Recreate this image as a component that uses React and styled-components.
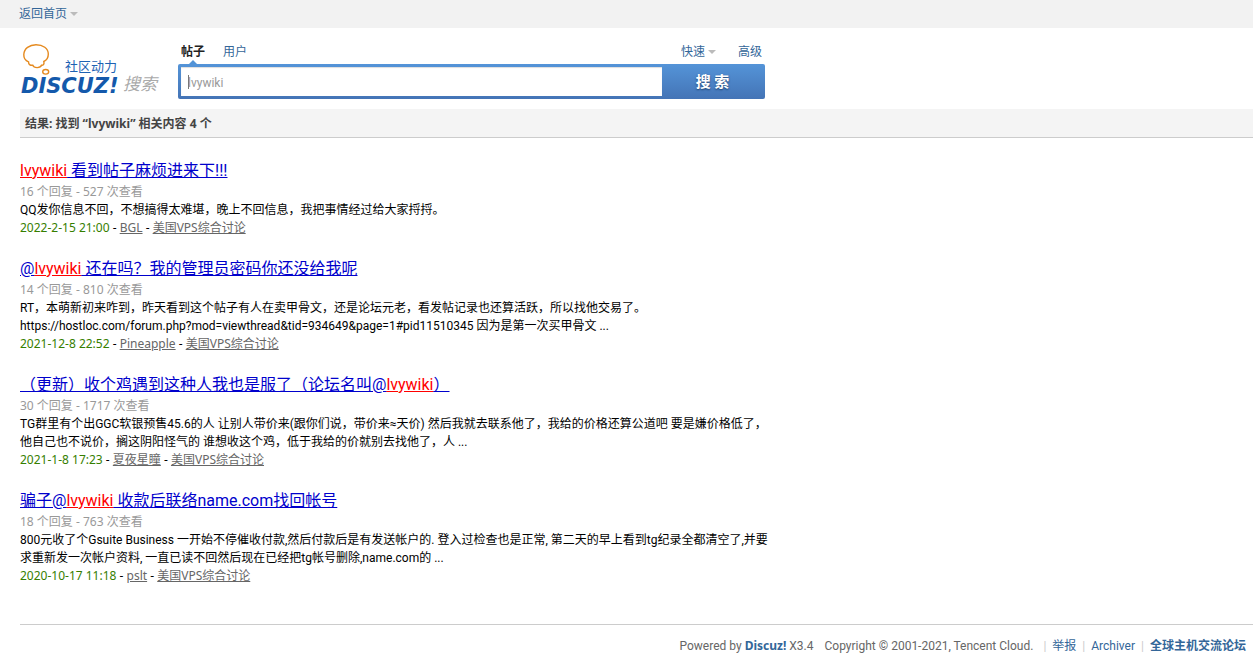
import React, { useState } from "react";
import styled, { createGlobalStyle } from "styled-components";

const colors = {
  link: "#336699",
  title: "#0000cc",
  red: "#ff0000",
  green: "#367e00",
  grey: "#666666",
  light: "#999999",
  line: "#cccccc"
};

const wideFont = 'font-family: "Noto Sans", "Noto Sans CJK SC", sans-serif;';

const KEYWORD = "lvywiki";

const results = [
  {
    id: 1,
    title: "lvywiki 看到帖子麻烦进来下!!!",
    replies: 16,
    views: 527,
    lines: ["QQ发你信息不回，不想搞得太难堪，晚上不回信息，我把事情经过给大家捋捋。"],
    date: "2022-2-15 21:00",
    author: "BGL"
  },
  {
    id: 2,
    title: "@lvywiki 还在吗？我的管理员密码你还没给我呢",
    replies: 14,
    views: 810,
    lines: [
      "RT，本萌新初来咋到，昨天看到这个帖子有人在卖甲骨文，还是论坛元老，看发帖记录也还算活跃，所以找他交易了。",
      "https://hostloc.com/forum.php?mod=viewthread&tid=934649&page=1#pid11510345 因为是第一次买甲骨文 ..."
    ],
    date: "2021-12-8 22:52",
    author: "Pineapple"
  },
  {
    id: 3,
    title: "（更新）收个鸡遇到这种人我也是服了（论坛名叫@lvywiki）",
    replies: 30,
    views: 1717,
    lines: [
      "TG群里有个出GGC软银预售45.6的人 让别人带价来(跟你们说，带价来≈天价) 然后我就去联系他了，我给的价格还算公道吧 要是嫌价格低了，",
      "他自己也不说价，搁这阴阳怪气的 谁想收这个鸡，低于我给的价就别去找他了，人 ..."
    ],
    date: "2021-1-8 17:23",
    author: "夏夜星瞳"
  },
  {
    id: 4,
    title: "骗子@lvywiki 收款后联络name.com找回帐号",
    replies: 18,
    views: 763,
    lines: [
      "800元收了个Gsuite Business 一开始不停催收付款,然后付款后是有发送帐户的. 登入过检查也是正常, 第二天的早上看到tg纪录全都清空了,并要",
      "求重新发一次帐户资料, 一直已读不回然后现在已经把tg帐号删除,name.com的 ..."
    ],
    date: "2020-10-17 11:18",
    author: "pslt"
  }
];

// wraps the searched keyword in red
const Highlight = ({ text }) => {
  const [before, after] = text.split(KEYWORD);
  return (
    <>
      {before}
      <Hit>{KEYWORD}</Hit>
      {after}
    </>
  );
};

const Logo = () => (
  <svg width="140" height="56" viewBox="0 0 140 56" role="img" aria-label="Discuz! 搜索">
    <g fill="none" stroke="#e58a1f" strokeWidth="1.4">
      <path d="M8.500 20.800C5 19.500 3.700 16.500 3.800 13.500C4 7.500 9.500 3.700 16 3.700C23 3.700 28.300 7.500 28.300 13C28.300 17 26.500 19.300 23.800 20.500C24.500 23 23.500 24.300 21.500 24.300C20.500 27.200 14 27.500 12.800 24.300C10 24.500 8.500 23.500 8.500 20.800Z" />
      <ellipse cx="25.700" cy="30.800" rx="3" ry="2.300" />
    </g>
    <LogoText x="45" y="30" $size={13} $color="#1d62b3">
      社区动力
    </LogoText>
    <LogoText x="1" y="52" $size={21} $color="#1459ab" $brand>
      DISCUZ!
    </LogoText>
    <LogoText x="103" y="49" $size={17} $color="#aaaaaa" $italic>
      搜索
    </LogoText>
  </svg>
);

const Result = ({ title, replies, views, lines, date, author }) => (
  <Item>
    <ItemTitle>
      <TitleLink href="#thread">
        <Highlight text={title} />
      </TitleLink>
    </ItemTitle>
    <Counts>
      {replies} 个回复 - {views} 次查看
    </Counts>
    {lines.map(line => (
      <Line key={line}>{line}</Line>
    ))}
    <Meta>
      <DateText>{date}</DateText> - <GreyLink href="#user">{author}</GreyLink> -{" "}
      <GreyLink href="#forum">美国VPS综合讨论</GreyLink>
    </Meta>
  </Item>
);

const App = () => {
  const [query, setQuery] = useState(KEYWORD);

  return (
    <>
      <GlobalStyle />
      <TopBar>
        <NavLink href="#home">
          返回首页
          <Arrow />
        </NavLink>
      </TopBar>
      <Header>
        <Logo />
        <SearchForm onSubmit={e => e.preventDefault()}>
          <Tabs>
            <Tab href="#posts" $active>
              帖子
            </Tab>
            <Tab href="#users">用户</Tab>
            <Spacer />
            <Tab href="#quick">
              快速
              <Arrow />
            </Tab>
            <Tab href="#advanced">高级</Tab>
          </Tabs>
          <SearchBox>
            <Field>
              <Input
                type="text"
                aria-label="搜索"
                value={query}
                onChange={e => setQuery(e.target.value)}
              />
              <Caret />
            </Field>
            <SearchButton type="submit">搜 索</SearchButton>
          </SearchBox>
        </SearchForm>
      </Header>
      <Main>
        <Summary>结果: 找到 “{KEYWORD}” 相关内容 4 个</Summary>
        <List>
          {results.map(result => (
            <Result key={result.id} {...result} />
          ))}
        </List>
        <Footer>
          <span>
            Powered by{" "}
            <FooterLink href="#discuz" $bold>
              Discuz!
            </FooterLink>{" "}
            X3.4
          </span>
          <Copyright>Copyright © 2001-2021, Tencent Cloud.</Copyright>
          <Pipe>|</Pipe>
          <FooterLink href="#report">举报</FooterLink>
          <Pipe>|</Pipe>
          <FooterLink href="#archiver">Archiver</FooterLink>
          <Pipe>|</Pipe>
          <FooterLink href="#site" $bold>
            全球主机交流论坛
          </FooterLink>
        </Footer>
      </Main>
    </>
  );
};

const GlobalStyle = createGlobalStyle`
  * {
    box-sizing: border-box;
  }
  body {
    margin: 0;
    background: #fff;
    color: #000;
    font: 12px/18px Roboto, "Noto Sans CJK SC", sans-serif;
  }
  input, button {
    font-family: inherit;
  }
`;

const TopBar = styled.nav`
  display: flex;
  align-items: center;
  height: 28px;
  padding: 0 19px;
  background: #f2f2f2;
`;

const NavLink = styled.a`
  display: flex;
  align-items: center;
  color: ${colors.link};
  text-decoration: none;
`;

const Arrow = styled.span`
  margin: 0 4px 0 3px;
  border: 4px solid transparent;
  border-top-color: #bbb;
  border-bottom: 0;
`;

const Header = styled.header`
  display: flex;
  align-items: flex-start;
  gap: 18px;
  padding: 13px 20px 10px;
`;

const LogoText = styled.text`
  fill: ${({ $color }) => $color};
  font-size: ${({ $size }) => $size}px;
  font-family: ${({ $brand }) =>
    $brand ? '"DejaVu Sans", sans-serif' : '"Noto Sans CJK SC", sans-serif'};
  font-weight: ${({ $brand }) => ($brand ? "bold" : "normal")};
  font-style: ${({ $brand, $italic }) =>
    $brand || $italic ? "italic" : "normal"};
`;

const SearchForm = styled.form`
  flex: 0 1 587px;
`;

const Tabs = styled.div`
  display: flex;
  gap: 18px;
  height: 23px;
  padding: 2px 3px 0;
`;

const Tab = styled.a`
  position: relative;
  display: flex;
  align-items: center;
  color: ${({ $active }) => ($active ? "#222" : colors.link)};
  font-weight: ${({ $active }) => ($active ? "bold" : "normal")};
  line-height: 18px;
  height: 18px;
  text-decoration: none;

  &::after {
    content: "";
    display: ${({ $active }) => ($active ? "block" : "none")};
    position: absolute;
    top: 17px;
    left: 8px;
    border: 4px solid transparent;
    border-bottom-color: #5293d6;
    border-top: 0;
  }
`;

const Spacer = styled.span`
  flex: 1;
`;

const SearchBox = styled.div`
  display: flex;
  height: 35px;
  padding: 3px 0 3px 3px;
  border-radius: 2px;
  background: linear-gradient(#5494d8, #4474b6);
`;

const Field = styled.div`
  position: relative;
  flex: 1;
`;

const Input = styled.input`
  display: block;
  width: 100%;
  height: 29px;
  padding: 3px 7px 1px;
  border: 0;
  outline: 0;
  background: #fff;
  box-shadow: inset 0 1px 1px #ddd;
  color: ${colors.light};
  font-size: 12px;
`;

const Caret = styled.span`
  position: absolute;
  top: 8px;
  left: 7px;
  width: 1px;
  height: 14px;
  background: #777;
`;

const SearchButton = styled.button`
  width: 103px;
  padding: 0 2px 2px 0;
  border: 0;
  background: transparent;
  color: #fff;
  font-size: 15px;
  font-weight: bold;
  text-shadow: 0 1px 2px #1c3f6e;
`;

const Main = styled.main`
  padding-left: 20px;
`;

const Summary = styled.h2`
  margin: 0;
  padding: 6px 5px 4px;
  border-bottom: 1px solid ${colors.line};
  background: #f4f4f4;
  color: #444;
  ${wideFont}
  font-size: 12px;
  line-height: 18px;
`;

const List = styled.ul`
  max-width: 800px;
  margin: 0;
  padding: 21px 0 19px;
  list-style: none;
`;

const Item = styled.li`
  margin-bottom: 20px;
`;

const ItemTitle = styled.h3`
  margin: 0;
  font-size: 16px;
  font-weight: normal;
  line-height: 24px;
`;

const TitleLink = styled.a`
  color: ${colors.title};
`;

const Hit = styled.span`
  color: ${colors.red};
  text-decoration: underline;
`;

const Line = styled.p`
  margin: 0;
`;

const Meta = styled(Line)`
  ${wideFont}
`;

const Counts = styled(Meta)`
  color: ${colors.light};
`;

const DateText = styled.span`
  color: ${colors.green};
`;

const GreyLink = styled.a`
  color: ${colors.grey};
`;

const Footer = styled.footer`
  display: flex;
  justify-content: flex-end;
  padding: 12px 7px;
  border-top: 1px solid ${colors.line};
  color: ${colors.grey};
`;

const Copyright = styled.span`
  margin: 0 4px 0 11px;
`;

const Pipe = styled.span`
  margin: 0 6px;
  color: ${colors.line};
`;

const FooterLink = styled.a`
  color: ${colors.link};
  ${({ $bold }) => $bold && wideFont}
  font-weight: ${({ $bold }) => ($bold ? "bold" : "normal")};
  text-decoration: none;
`;

export default App;
